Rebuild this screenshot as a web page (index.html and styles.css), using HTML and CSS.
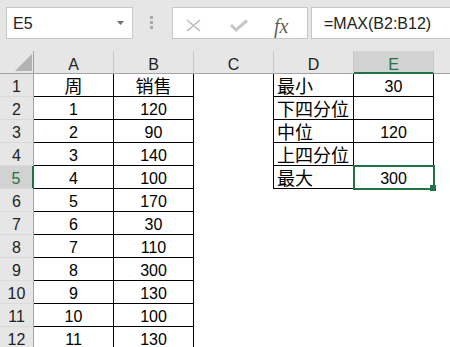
FILE: index.html
```html
<!DOCTYPE html>
<html lang="zh-CN">
<head>
  <meta charset="UTF-8">
  <meta name="viewport" content="width=device-width, initial-scale=1.0">
  <title>Sheet</title>
  <link rel="stylesheet" href="styles.css">
</head>
<body>
  <div class="toolbar">
    <div class="namebox">
      <span class="ref">E5</span>
      <svg class="arrow" width="7" height="4" viewBox="0 0 7 4"><polygon points="0,0 7,0 3.5,4" fill="#6f6f6f"/></svg>
    </div>
    <div class="grip"><span></span><span></span><span></span></div>
    <div class="fxbox">
      <svg class="cancel" width="17" height="13" viewBox="0 0 17 13"><path d="M2 1 L15 12 M15 1 L2 12" stroke="#bcbcbc" stroke-width="1.6" fill="none"/></svg>
      <svg class="enter" width="18" height="13" viewBox="0 0 18 13"><path d="M1 6 L6 11 L17 1.5" stroke="#c6c6c6" stroke-width="3" fill="none"/></svg>
      <span class="fx">fx</span>
    </div>
    <div class="formula">=MAX(B2:B12)</div>
  </div>

  <div class="sheet">
    <div class="row head">
      <div class="corner"><svg width="17" height="17" viewBox="0 0 17 17"><polygon points="17,0 17,17 0,17" fill="#b2b2b2"/></svg></div>
      <div class="col">A</div>
      <div class="col">B</div>
      <div class="col">C</div>
      <div class="col">D</div>
      <div class="col sel">E</div>
      <div class="col fill"></div>
    </div>
    <div class="row">
      <div class="rh">1</div>
      <div class="c line zh mid">周</div>
      <div class="c line zh mid">销售</div>
      <div class="c edge"></div>
      <div class="c line zh">最小</div>
      <div class="c line">30</div>
      <div class="c"></div>
    </div>
    <div class="row">
      <div class="rh">2</div>
      <div class="c line">1</div>
      <div class="c line">120</div>
      <div class="c edge"></div>
      <div class="c line zh">下四分位</div>
      <div class="c line"></div>
      <div class="c"></div>
    </div>
    <div class="row">
      <div class="rh">3</div>
      <div class="c line">2</div>
      <div class="c line">90</div>
      <div class="c edge"></div>
      <div class="c line zh">中位</div>
      <div class="c line">120</div>
      <div class="c"></div>
    </div>
    <div class="row">
      <div class="rh">4</div>
      <div class="c line">3</div>
      <div class="c line">140</div>
      <div class="c edge"></div>
      <div class="c line zh">上四分位</div>
      <div class="c line"></div>
      <div class="c"></div>
    </div>
    <div class="row">
      <div class="rh sel">5</div>
      <div class="c line">4</div>
      <div class="c line">100</div>
      <div class="c edge"></div>
      <div class="c line zh">最大</div>
      <div class="c line active">300</div>
      <div class="c"></div>
    </div>
    <div class="row">
      <div class="rh">6</div>
      <div class="c line">5</div>
      <div class="c line">170</div>
      <div class="c"></div><div class="c"></div><div class="c"></div><div class="c"></div>
    </div>
    <div class="row">
      <div class="rh">7</div>
      <div class="c line">6</div>
      <div class="c line">30</div>
      <div class="c"></div><div class="c"></div><div class="c"></div><div class="c"></div>
    </div>
    <div class="row">
      <div class="rh">8</div>
      <div class="c line">7</div>
      <div class="c line">110</div>
      <div class="c"></div><div class="c"></div><div class="c"></div><div class="c"></div>
    </div>
    <div class="row">
      <div class="rh">9</div>
      <div class="c line">8</div>
      <div class="c line">300</div>
      <div class="c"></div><div class="c"></div><div class="c"></div><div class="c"></div>
    </div>
    <div class="row">
      <div class="rh">10</div>
      <div class="c line">9</div>
      <div class="c line">130</div>
      <div class="c"></div><div class="c"></div><div class="c"></div><div class="c"></div>
    </div>
    <div class="row">
      <div class="rh">11</div>
      <div class="c line">10</div>
      <div class="c line">100</div>
      <div class="c"></div><div class="c"></div><div class="c"></div><div class="c"></div>
    </div>
    <div class="row">
      <div class="rh">12</div>
      <div class="c line">11</div>
      <div class="c line">130</div>
      <div class="c"></div><div class="c"></div><div class="c"></div><div class="c"></div>
    </div>
  </div>
</body>
</html>
```

FILE: styles.css
```css
body {
  margin: 0;
  width: 450px;
  height: 347px;
  overflow: hidden;
  background-color: #fff;
  font-family: "Liberation Sans", "Noto Sans CJK SC", sans-serif;
  font-size: 16px;
  color: #000;
}

/* formula bar */
.toolbar {
  display: flex;
  align-items: flex-start;
  box-sizing: border-box;
  height: 51px;
  padding-top: 7px;
  background-color: #e6e6e6;
}
.namebox {
  display: flex;
  align-items: flex-start;
  box-sizing: border-box;
  width: 127px;
  height: 32px;
  margin-left: 6px;
  padding: 6px 0 0 6px;
  background-color: #fff;
  border: 1px solid #c6c6c6;
  line-height: 20px;
  color: #222;
}
.arrow {
  margin: 7px 8px 0 auto;
}
.grip {
  display: flex;
  flex-direction: column;
  gap: 2px;
  margin: 9px 0 0 17px;
}
.grip span {
  width: 3px;
  height: 3px;
  background-color: #a9a9a9;
}
.fxbox {
  display: flex;
  align-items: flex-start;
  box-sizing: border-box;
  width: 136px;
  height: 32px;
  margin-left: 19px;
  background-color: #fff;
  border: 1px solid #c6c6c6;
}
.cancel {
  margin: 11px 0 0 12px;
}
.enter {
  margin: 11px 0 0 28px;
}
.fx {
  margin: 8px 0 0 26px;
  font-family: "Liberation Serif", serif;
  font-style: italic;
  font-size: 20px;
  line-height: 20px;
  color: #5f5f5f;
}
.formula {
  flex: 1;
  box-sizing: border-box;
  height: 32px;
  margin: 0 -10px 0 3px;
  padding: 6px 0 0 12px;
  background-color: #fff;
  border: 1px solid #c6c6c6;
  line-height: 20px;
  color: #222;
}

/* grid */
.row {
  display: grid;
  grid-template-columns: 34px repeat(5, 80px) 1fr;
  height: 23px;
}
.row > div {
  box-sizing: border-box;
  height: 23px;
}
.corner {
  display: flex;
  justify-content: flex-end;
  align-items: flex-end;
  padding: 0 1px 2px 0;
  background-color: #e6e6e6;
  border-right: 1px solid #a3a3a3;
  border-bottom: 1px solid #a3a3a3;
}
.col {
  padding-top: 4px;
  line-height: 20px;
  text-align: center;
  color: #222;
  background-color: #e6e6e6;
  border-right: 1px solid #c8c8c8;
  border-bottom: 1px solid #a3a3a3;
}
.col.fill {
  border-right: none;
}
.col.sel {
  background-color: #d2d2d2;
  color: #217346;
  border-bottom: 2px solid #217346;
}
.rh {
  padding-top: 3px;
  line-height: 20px;
  text-align: center;
  color: #222;
  background-color: #e6e6e6;
  border-right: 1px solid #a3a3a3;
  border-bottom: 1px solid #dadada;
}
.rh.sel {
  background-color: #d2d2d2;
  color: #217346;
  border-right: 2px solid #217346;
}
.c {
  padding-top: 3px;
  line-height: 20px;
  text-align: center;
  white-space: nowrap;
}
.line {
  border-right: 1px solid #000;
  border-bottom: 1px solid #000;
}
.edge {
  border-right: 1px solid #000;
}
.c.zh {
  padding: 0 0 0 3px;
  font-family: "Noto Sans CJK SC", sans-serif;
  font-size: 18px;
  line-height: 22px;
  text-align: left;
}
.c.zh.mid {
  padding-left: 0;
  text-align: center;
}
.active {
  position: relative;
}
.active::before {
  content: "";
  position: absolute;
  top: -1px;
  left: -1px;
  right: -2px;
  bottom: -2px;
  border: 2px solid #217346;
}
.active::after {
  content: "";
  position: absolute;
  right: -3px;
  bottom: -3px;
  width: 6px;
  height: 6px;
  background-color: #217346;
}
```
